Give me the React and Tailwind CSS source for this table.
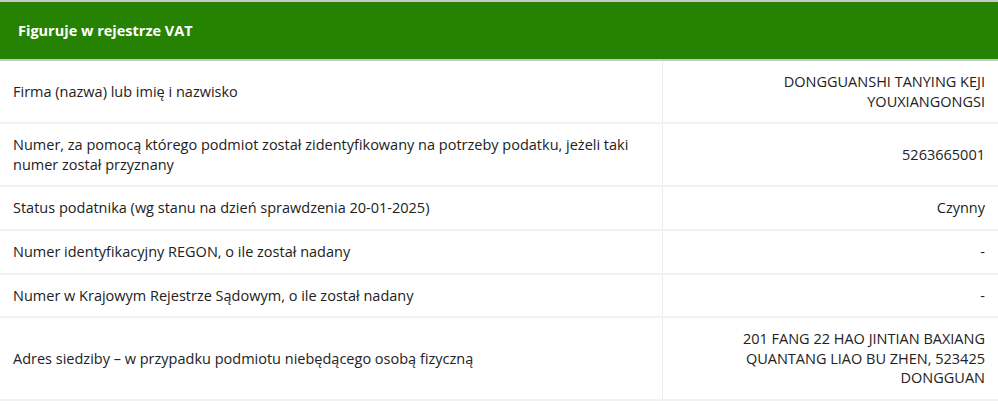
import React from 'react'

const rows = [
  ['Firma (nazwa) lub imię i nazwisko', 'DONGGUANSHI TANYING KEJI YOUXIANGONGSI'],
  [
    'Numer, za pomocą którego podmiot został zidentyfikowany na potrzeby podatku, jeżeli taki numer został przyznany',
    '5263665001',
  ],
  ['Status podatnika (wg stanu na dzień sprawdzenia 20-01-2025)', 'Czynny'],
  ['Numer identyfikacyjny REGON, o ile został nadany', '-'],
  ['Numer w Krajowym Rejestrze Sądowym, o ile został nadany', '-'],
  [
    'Adres siedziby – w przypadku podmiotu niebędącego osobą fizyczną',
    '201 FANG 22 HAO JINTIAN BAXIANG QUANTANG LIAO BU ZHEN, 523425 DONGGUAN',
  ],
]

export default function App() {
  return (
    <div className="w-[998px] h-[405px] overflow-hidden bg-white text-[14.5px] leading-[19.6px] text-[#222] font-['Open_Sans',sans-serif]">
      {/* Header */}
      <div className="border-t-2 border-b-2 border-[#c8c8c8] bg-[#268203]">
        <div className="h-[57px] flex items-center px-[18px] font-bold text-white">
          Figuruje w rejestrze VAT
        </div>
      </div>

      {/* Rows */}
      {rows.map(([label, value], i) => (
        <div key={i} className="grid grid-cols-[663px_1fr] border-b-2 border-[#f2f2f2]">
          <div className="flex items-center px-[13px] py-[11px] border-r border-[#ececec]">
            {label}
          </div>
          <div className="flex items-center justify-end text-right px-[13px] py-[11px]">
            {value}
          </div>
        </div>
      ))}
    </div>
  )
}
